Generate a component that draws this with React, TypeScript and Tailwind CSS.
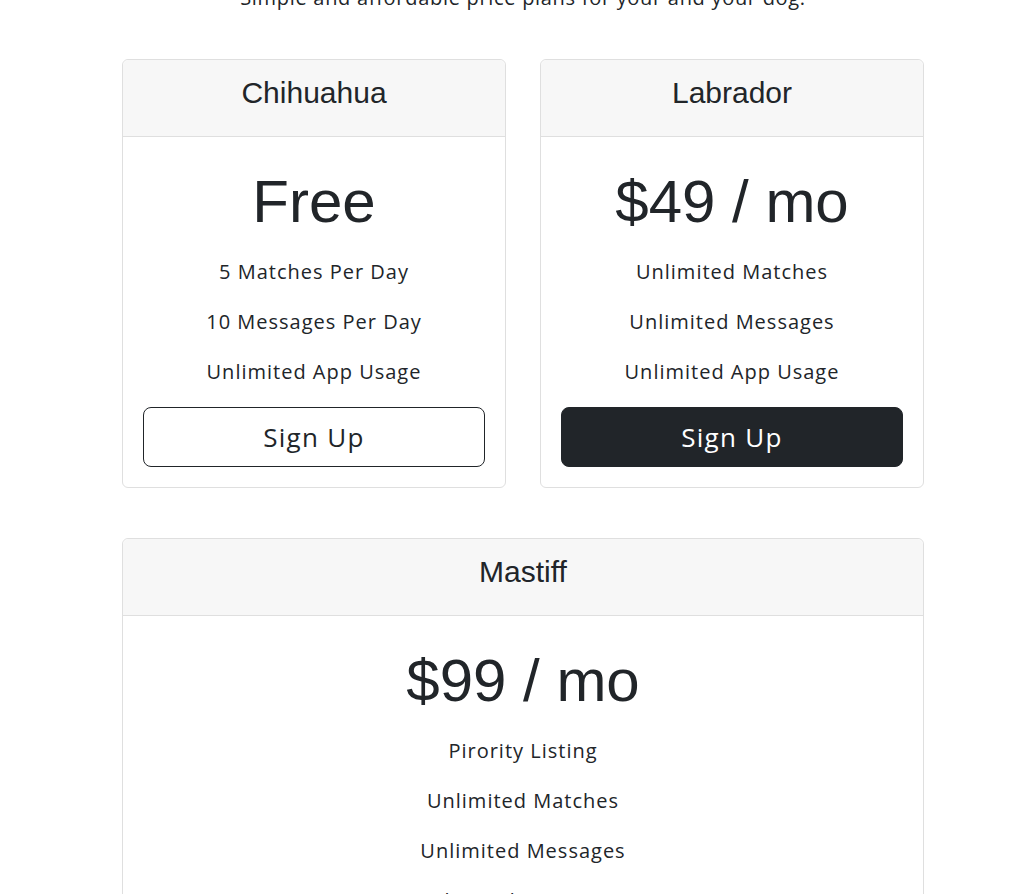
const plans = [
  {
    name: 'Chihuahua',
    price: 'Free',
    features: ['5 Matches Per Day', '10 Messages Per Day', 'Unlimited App Usage'],
    dark: false,
  },
  {
    name: 'Labrador',
    price: '$49 / mo',
    features: ['Unlimited Matches', 'Unlimited Messages', 'Unlimited App Usage'],
    dark: true,
  },
  {
    name: 'Mastiff',
    price: '$99 / mo',
    features: ['Pirority Listing', 'Unlimited Matches', 'Unlimited Messages', 'Unlimited App Usage'],
    dark: true,
  },
];

type Plan = (typeof plans)[number];

const PricingCard = ({ plan }: { plan: Plan }) => (
  <div className="flex flex-col rounded-[6px] border border-[#dfdfdf] bg-white text-center text-[#212529]">
    <div className="h-[77px] rounded-t-[6px] border-b border-[#dfdfdf] bg-[#f7f7f7] pt-[15px]">
      <h4 className="font-['Liberation_Sans',Arial,sans-serif] text-[30px] leading-[36px]">{plan.name}</h4>
    </div>
    <div className="flex flex-col px-[20px] pt-[29px] pb-[20px]">
      <h1 className="font-['Liberation_Sans',Arial,sans-serif] text-[60px] leading-[72px]">{plan.price}</h1>
      <ul className="mt-[9px] font-['Open_Sans',sans-serif] text-[20px] leading-[50px] tracking-[0.05em]">
        {plan.features.map((f, i) => (
          <li key={i}>{f}</li>
        ))}
      </ul>
      <button
        className={
          plan.dark
            ? 'mt-[10px] h-[60px] rounded-[8px] border border-[#212529] bg-[#212529] font-["Open_Sans",sans-serif] text-[26px] tracking-[0.05em] text-white'
            : 'mt-[10px] h-[60px] rounded-[8px] border border-[#212529] bg-white font-["Open_Sans",sans-serif] text-[26px] tracking-[0.05em] text-[#212529]'
        }
      >
        Sign Up
      </button>
    </div>
  </div>
);

export default function App() {
  return (
    <div className="min-h-[894px] overflow-hidden bg-white">
      <p className="ml-[24px] mt-[-17px] text-center font-['Open_Sans',sans-serif] text-[20px] leading-[30px] tracking-[0.035em] text-[#212529]">
        Simple and affordable price plans for your and your dog.
      </p>
      <div className="ml-[122px] mt-[46px] flex w-[802px] flex-col gap-[50px]">
        <div className="grid grid-cols-2 gap-[34px]">
          <PricingCard plan={plans[0]} />
          <PricingCard plan={plans[1]} />
        </div>
        <PricingCard plan={plans[2]} />
      </div>
    </div>
  );
}
